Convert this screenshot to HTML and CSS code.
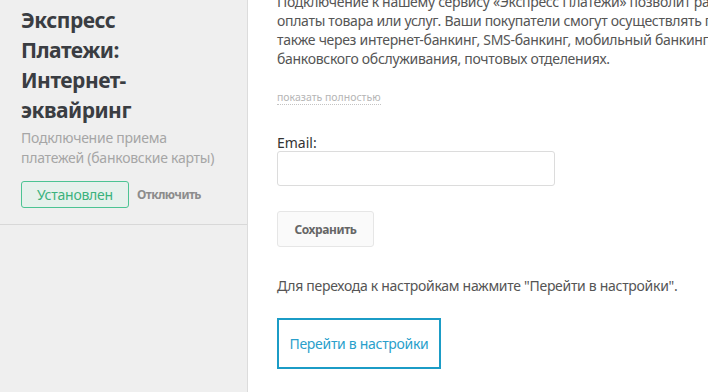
FILE: index.html
```
<!DOCTYPE html>
<html lang="ru">
<head>
    <meta charset="UTF-8">
    <title>Экспресс Платежи: Интернет-эквайринг</title>
    <link rel="stylesheet" href="styles.css">
</head>
<body>
    <div class="layout">
        <aside class="sidebar">
            <div class="app-card">
                <h1>Экспресс Платежи: Интернет-эквайринг</h1>
                <p class="app-sub">Подключение приема платежей (банковские карты)</p>
                <div class="app-actions">
                    <span class="badge-installed">Установлен</span>
                    <a href="#" class="link-off">Отключить</a>
                </div>
            </div>
        </aside>

        <main class="content">
            <p class="descr">
                Подключение к нашему сервису «Экспресс Платежи» позволит ра<br>
                оплаты товара или услуг. Ваши покупатели смогут осуществлять п.<br>
                также через интернет-банкинг, SMS-банкинг, мобильный банкинг,<br>
                банковского обслуживания, почтовых отделениях.
            </p>
            <a href="#" class="show-more">показать полностью</a>

            <form class="settings-form">
                <label class="field-label" for="email">Email:</label>
                <input class="field-input" id="email" type="text">
                <button type="button" class="btn-save">Сохранить</button>
            </form>

            <p class="hint">Для перехода к настройкам нажмите "Перейти в настройки".</p>
            <a href="#" class="btn-settings">Перейти в настройки</a>
        </main>
    </div>
</body>
</html>
```
FILE: styles.css
```
* {
    margin: 0;
    padding: 0;
    box-sizing: border-box;
}

body {
    font-family: "Noto Sans", "Open Sans", sans-serif;
    background: #fff;
    color: #555;
    overflow: hidden;
}

.layout {
    display: flex;
    height: 392px;
}

.sidebar {
    width: 248px;
    flex-shrink: 0;
    background: #efefef;
    border-right: 1px solid #dcdcdc;
}

.app-card {
    padding: 5px 20px 16px 21px;
    border-bottom: 1px solid #d8d8d8;
    height: 225px;
}

.app-card h1 {
    font-size: 21px;
    line-height: 30px;
    font-weight: 700;
    color: #3a3d42;
    letter-spacing: -0.5px;
    width: 150px;
}

.app-sub {
    font-size: 14px;
    line-height: 20px;
    color: #a6a6a6;
    margin-top: 3px;
    letter-spacing: -0.25px;
}

.app-actions {
    display: flex;
    align-items: center;
    margin-top: 13px;
}

.badge-installed {
    display: inline-flex;
    align-items: center;
    justify-content: center;
    width: 108px;
    height: 27px;
    border: 1px solid #4cc493;
    border-radius: 3px;
    background: #e6f1ec;
    color: #3bb27c;
    font-size: 14px;
    letter-spacing: -0.25px;
}

.link-off {
    margin-left: 8px;
    font-size: 12px;
    font-weight: 700;
    color: #8c8c8c;
    text-decoration: none;
    letter-spacing: -0.6px;
}

.content {
    flex: 1;
    padding-left: 29px;
    overflow: hidden;
    white-space: nowrap;
}

.descr {
    font-size: 14px;
    line-height: 19px;
    color: #555;
    margin-top: -8px;
    letter-spacing: -0.3px;
}

.show-more {
    display: inline-block;
    margin-top: 23px;
    font-size: 10.5px;
    line-height: 13px;
    color: #b5b5b5;
    text-decoration: none;
    border-bottom: 1px dotted #c4c4c4;
}

.settings-form {
    display: flex;
    flex-direction: column;
    align-items: flex-start;
    margin-top: 27px;
}

.field-label {
    font-size: 14px;
    line-height: 19px;
    color: #333;
}

.field-input {
    width: 278px;
    height: 35px;
    margin-top: -1px;
    border: 1px solid #dcdcdc;
    border-radius: 3px;
    background: #fff;
    outline: none;
}

.btn-save {
    margin-top: 25px;
    width: 97px;
    height: 36px;
    border: 1px solid #e6e6e6;
    border-radius: 3px;
    background: #fafafa;
    color: #666;
    font-family: inherit;
    font-size: 12px;
    font-weight: 700;
    letter-spacing: -0.4px;
}

.hint {
    margin-top: 29px;
    font-size: 14px;
    line-height: 19px;
    color: #555;
    letter-spacing: -0.3px;
}

.btn-settings {
    display: inline-flex;
    align-items: center;
    justify-content: center;
    margin-top: 23px;
    width: 164px;
    height: 51px;
    border: 2px solid #1b9cc6;
    color: #2a9fcb;
    font-size: 14px;
    letter-spacing: -0.3px;
    text-decoration: none;
}
```
